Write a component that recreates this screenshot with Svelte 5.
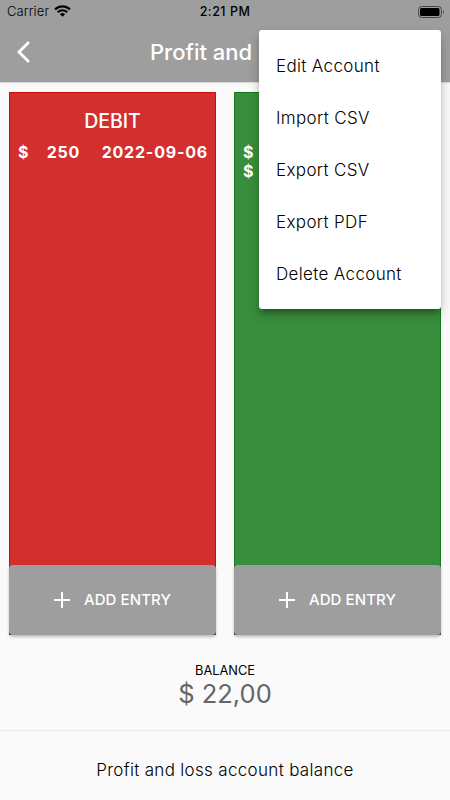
<script lang="ts">
	type Entry = { symbol: string; amount: string; date: string };
	type Column = { name: string; color: string; entries: Entry[] };

	let menuOpen = $state(true);

	const menuItems = ['Edit Account', 'Import CSV', 'Export CSV', 'Export PDF', 'Delete Account'];

	const columns: Column[] = [
		{ name: 'DEBIT', color: 'red', entries: [{ symbol: '$', amount: '250', date: '2022-09-06' }] },
		{
			name: '',
			color: 'green',
			entries: [
				{ symbol: '$', amount: '', date: '' },
				{ symbol: '$', amount: '', date: '' }
			]
		}
	];
</script>

<div class="screen">
	<header>
		<div class="status">
			<div class="carrier">
				<span>Carrier</span>
				<svg width="17" height="12" viewBox="0 0 17 12">
					<path d="M1 4.4a10.8 10.8 0 0 1 15 0" fill="none" stroke="#000" stroke-width="2.2" />
					<path d="M3.7 7.3a6.8 6.8 0 0 1 9.6 0" fill="none" stroke="#000" stroke-width="2" />
					<path d="M8.5 11.8L5.9 9.2a3.7 3.7 0 0 1 5.2 0z" />
				</svg>
			</div>
			<span class="time">2:21 PM</span>
			<div class="battery">
				<svg width="28" height="12" viewBox="0 0 28 12">
					<rect x="0.6" y="0.5" width="22.8" height="11" rx="3" fill="none" stroke="#444" />
					<rect x="2" y="2" width="19.5" height="8" rx="1.5" />
					<path d="M25 4.2v3.6c1.3-.6 1.3-3 0-3.6z" fill="#444" />
				</svg>
			</div>
		</div>
		<div class="bar">
			<button class="back" type="button" aria-label="Back">
				<svg width="14" height="22" viewBox="0 0 14 22">
					<path d="M12 1L2 11l10 10" fill="none" stroke="#fff" stroke-width="2.8" />
				</svg>
			</button>
			<h1>Profit and</h1>
		</div>
	</header>

	<main>
		{#each columns as column}
			<section class={column.color}>
				<h2>{column.name}</h2>
				<div class="entries">
					{#each column.entries as entry}
						<div class="entry">
							<span>{entry.symbol}</span>
							<span class="amount">{entry.amount}</span>
							<span>{entry.date}</span>
						</div>
					{/each}
				</div>
				<button class="add" type="button">
					<svg width="16" height="16" viewBox="0 0 16 16">
						<path d="M8 0v16M0 8h16" stroke="#fff" stroke-width="2" />
					</svg>
					<span>ADD ENTRY</span>
				</button>
			</section>
		{/each}
	</main>

	<div class="balance">
		<div class="label">BALANCE</div>
		<div class="total">$ 22,00</div>
	</div>

	<footer>Profit and loss account balance</footer>

	{#if menuOpen}
		<div class="menu">
			{#each menuItems as item}
				<button type="button" onclick={() => (menuOpen = false)}>{item}</button>
			{/each}
		</div>
	{/if}
</div>

<style>
	:global(body) {
		margin: 0;
	}
	.screen {
		position: relative;
		display: flex;
		flex-direction: column;
		width: 450px;
		height: 800px;
		overflow: hidden;
		background: #fafafa;
		color: #000;
		font-family: Inter, sans-serif;
	}
	button {
		padding: 0;
		border: none;
		background: none;
		font-family: inherit;
	}
	svg {
		display: block;
		flex: none;
	}
	header {
		height: 82px;
		flex: none;
		background: #9e9e9e;
		box-shadow: 0 1px 1px rgba(0, 0, 0, 0.12);
	}
	.status {
		display: grid;
		grid-template-columns: 1fr auto 1fr;
		align-items: center;
		height: 22px;
		padding: 0 4px 0 7px;
		box-sizing: border-box;
		color: #000;
		font-size: 13px;
		line-height: 22px;
	}
	.carrier {
		display: flex;
		align-items: center;
		gap: 5px;
		font-weight: 300;
		letter-spacing: 0.1px;
	}
	.carrier svg {
		margin-top: -1px;
	}
	.carrier span {
		position: relative;
		top: -1px;
	}
	.time {
		padding: 1px 3px 0 0;
		font-weight: 500;
		font-size: 12.5px;
		letter-spacing: 0.5px;
	}
	.battery {
		display: flex;
		justify-content: flex-end;
	}
	.bar {
		display: grid;
		grid-template-columns: 150px 1fr;
		align-items: center;
		height: 60px;
	}
	.back {
		padding-left: 17px;
	}
	h1 {
		margin: 0;
		color: #fff;
		font-size: 22px;
		font-weight: 500;
		white-space: nowrap;
	}
	main {
		display: flex;
		gap: 18px;
		padding: 10px 9px 0;
		height: 543px;
		flex: none;
	}
	section {
		display: flex;
		flex-direction: column;
		flex: 1;
		box-sizing: border-box;
		color: #fff;
	}
	.red {
		background: #d32f2f;
		box-shadow: inset 0 0 0 1px #c90d0d;
	}
	.green {
		background: #388e3c;
		box-shadow: inset 0 0 0 1px #137b17;
	}
	h2 {
		height: 24px;
		margin: 17px 0 10px;
		font-size: 19.5px;
		font-weight: 500;
		line-height: 24px;
		text-align: center;
	}
	.entries {
		flex: 1;
		padding: 0 8px 0 9px;
	}
	.entry {
		display: flex;
		justify-content: space-between;
		height: 19px;
		font-size: 16px;
		font-weight: 700;
		line-height: 19px;
		letter-spacing: 0.8px;
	}
	.amount {
		margin-right: 4px;
	}
	.add {
		display: flex;
		align-items: center;
		justify-content: center;
		gap: 14px;
		height: 70px;
		border-radius: 4px;
		background: #9e9e9e;
		color: #fff;
		font-size: 15px;
		font-weight: 500;
		letter-spacing: 0.1px;
		box-shadow: 0 2px 3px rgba(0, 0, 0, 0.25);
	}
	.add span {
		padding-bottom: 1px;
	}
	.balance {
		display: flex;
		flex-direction: column;
		align-items: center;
		height: 96px;
		padding-top: 28px;
		box-sizing: border-box;
		border-bottom: 1px solid #ebebeb;
		flex: none;
	}
	.label {
		font-size: 12.8px;
		line-height: 16px;
	}
	.total {
		color: #666;
		font-size: 25.5px;
		line-height: 30px;
	}
	footer {
		padding-top: 27px;
		font-size: 17px;
		font-weight: 300;
		line-height: 24px;
		letter-spacing: 0.32px;
		text-align: center;
	}
	.menu {
		position: absolute;
		top: 30px;
		right: 9px;
		display: flex;
		flex-direction: column;
		width: 182px;
		height: 279px;
		padding: 10px 0 9px;
		box-sizing: border-box;
		border-radius: 3px;
		background: #fff;
		box-shadow:
			0 5px 5px -2px rgba(0, 0, 0, 0.25),
			0 6px 12px rgba(0, 0, 0, 0.22);
	}
	.menu button {
		height: 52px;
		flex: none;
		padding-left: 17px;
		color: #000;
		font-size: 17px;
		font-weight: 300;
		letter-spacing: 0.34px;
		text-align: left;
	}
</style>
